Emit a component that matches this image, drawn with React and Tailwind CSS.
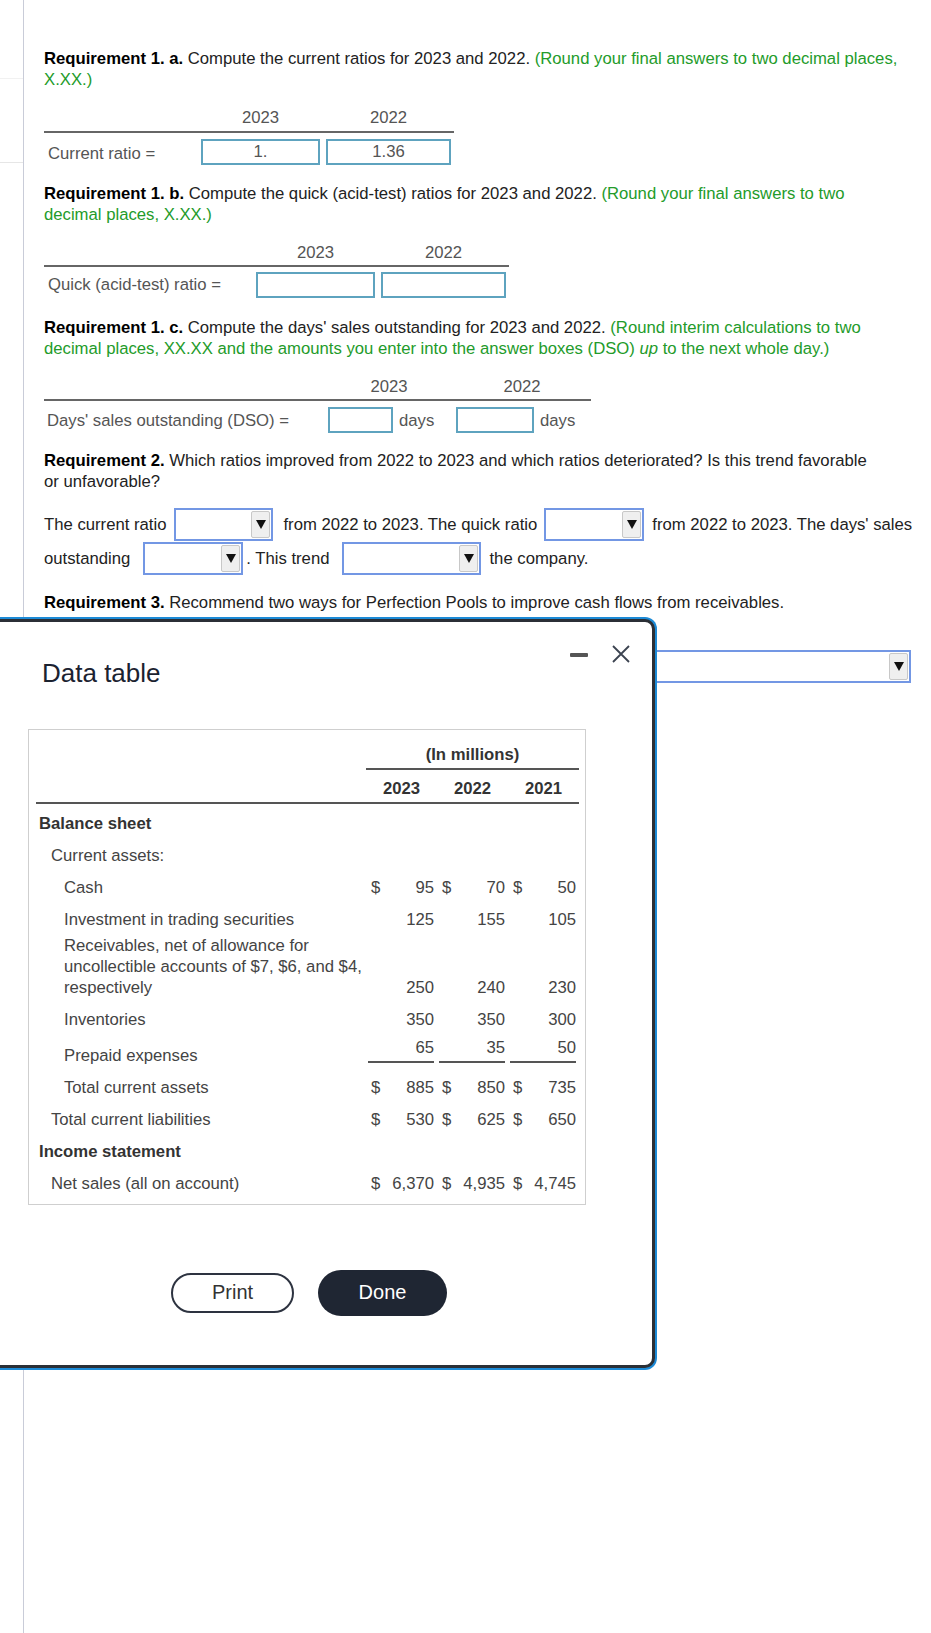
import React from 'react';

const GREEN = 'text-[#239b2a]';

function Box({ className = '', children }) {
    return (
        <div className={`h-[26px] border-2 border-[#5ea3bf] bg-white text-center text-[#555] leading-[22px] ${className}`}>
            {children}
        </div>
    );
}

function Select({ className = '' }) {
    return (
        <div className={`flex h-[33px] shrink-0 justify-end border-2 border-[#7397e4] bg-white p-[1px] ${className}`}>
            <div className="flex w-[19px] items-center justify-center rounded-[2px] border border-[#c8c8c8] bg-[#efefef]">
                <svg width="10" height="9" viewBox="0 0 10 9"><path d="M0 0h10L5 9z" fill="#111" /></svg>
            </div>
        </div>
    );
}

function Cell({ d, v, line }) {
    return (
        <div className="w-[71px] pl-[2px] pr-[3px]">
            <div className={`flex justify-between ${line ? 'border-b-2 border-[#555] pt-[1px] pb-[3px]' : ''}`}>
                <span className="pl-[3px]">{d}</span>
                <span>{v}</span>
            </div>
        </div>
    );
}

const INDENT = ['pl-[3px]', 'pl-[15px]', 'pl-[28px]'];

const ROWS = [
    { label: 'Balance sheet', bold: true, ind: 0 },
    { label: 'Current assets:', ind: 1 },
    { label: 'Cash', ind: 2, vals: [['$', '95'], ['$', '70'], ['$', '50']] },
    { label: 'Investment in trading securities', ind: 2, vals: [['', '125'], ['', '155'], ['', '105']] },
    {
        label: <>Receivables, net of allowance for<br />uncollectible accounts of $7, $6, and $4,<br />respectively</>,
        ind: 2, multi: true, vals: [['', '250'], ['', '240'], ['', '230']]
    },
    { label: 'Inventories', ind: 2, vals: [['', '350'], ['', '350'], ['', '300']] },
    { label: 'Prepaid expenses', ind: 2, line: true, vals: [['', '65'], ['', '35'], ['', '50']] },
    { label: 'Total current assets', ind: 2, vals: [['$', '885'], ['$', '850'], ['$', '735']] },
    { label: 'Total current liabilities', ind: 1, vals: [['$', '530'], ['$', '625'], ['$', '650']] },
    { label: 'Income statement', bold: true, ind: 0 },
    { label: 'Net sales (all on account)', ind: 1, vals: [['$', '6,370'], ['$', '4,935'], ['$', '4,745']] },
];

function DataRow({ r }) {
    if (r.line) {
        return (
            <div className="flex h-[36px]">
                <div className={`w-[330px] self-end pb-[5.5px] ${INDENT[r.ind]}`}>{r.label}</div>
                <div className="flex self-start">
                    {r.vals.map((c, i) => <Cell key={i} d={c[0]} v={c[1]} line />)}
                </div>
            </div>
        );
    }
    return (
        <div className={`flex ${r.multi ? 'pb-[5.5px]' : 'py-[5.5px]'}`}>
            <div className={`w-[330px] ${INDENT[r.ind]} ${r.bold ? 'font-bold text-[#333]' : ''}`}>{r.label}</div>
            {r.vals && (
                <div className="flex items-end">
                    {r.vals.map((c, i) => <Cell key={i} d={c[0]} v={c[1]} />)}
                </div>
            )}
        </div>
    );
}

function DataModal() {
    return (
        <div className="absolute left-[-20px] top-[619px] h-[749px] w-[675px] rounded-r-[10px] border-[3px] border-[#2b2f36] bg-white pl-[45px] pr-[22px] pt-[23px] ring-2 ring-[#1c8ad6]">
            <div className="flex items-start justify-between">
                <div className="ml-[14px] mt-[13px] text-[26px] leading-[30px] text-[#1b2230]">Data table</div>
                <div className="flex items-start">
                    <div className="mt-[8px] h-[4px] w-[18px] rounded-[1px] bg-[#555]" />
                    <svg className="ml-[24px]" width="18" height="18" viewBox="0 0 18 18">
                        <path d="M1 1L17 17M17 1L1 17" stroke="#3b4350" strokeWidth="1.8" />
                    </svg>
                </div>
            </div>

            {/* table */}
            <div className="mt-[41px] w-[558px] border border-[#cfcfcf] pb-[4px] pl-[7px] text-[#444]">
                <div className="flex pt-[14px]">
                    <div className="w-[330px]" />
                    <div className="w-[213px] border-b-2 border-[#555] pb-[3px] text-center font-bold text-[#333]">(In millions)</div>
                </div>
                <div className="flex w-[543px] border-b-2 border-[#555] pb-[3px] pt-[8px] font-bold text-[#333]">
                    <div className="w-[330px]" />
                    {['2023', '2022', '2021'].map(y => <div key={y} className="w-[71px] text-center">{y}</div>)}
                </div>
                <div className="pt-[3px]">
                    {ROWS.map((r, i) => <DataRow key={i} r={r} />)}
                </div>
            </div>

            <div className="mt-[65px] ml-[143px] flex items-center gap-[24px]">
                <button className="h-[40px] w-[123px] rounded-full border-2 border-[#2d3340] bg-white text-[20px] text-[#333]">Print</button>
                <button className="h-[46px] w-[129px] rounded-full bg-[#1f2633] text-[20px] text-white">Done</button>
            </div>
        </div>
    );
}

export default function App() {
    return (
        <div className="relative flex min-h-[1633px] bg-white font-['Liberation_Sans',Arial,sans-serif] text-[16.7px] leading-[21px] text-[#222]">
            <div className="w-[24px] shrink-0 border-r border-[#c9ccd8]">
                <div className="h-[79px] border-b border-[#f1f1f1]" />
                <div className="h-[84px] border-b border-[#e6e6e6]" />
            </div>

            <main className="flex-1 whitespace-nowrap pl-[20px] pt-[48px]">
                <p>
                    <b className="text-black">Requirement 1. a.</b> Compute the current ratios for 2023 and 2022.{' '}
                    <span className={GREEN}>(Round your final answers to two decimal places,<br />X.XX.)</span>
                </p>

                <div className="mt-[17px] w-[410px]">
                    <div className="flex border-b-2 border-[#666] pb-[3px] text-[#555]">
                        <div className="w-[154px]" />
                        <div className="w-[125px] text-center">2023</div>
                        <div className="w-[131px] text-center">2022</div>
                    </div>
                    <div className="flex items-center pt-[5.5px]">
                        <div className="w-[154px] pl-[4px] pt-[3px] text-[#555]">Current ratio =</div>
                        <div className="w-[125px] px-[3px]"><Box>1.</Box></div>
                        <div className="w-[131px] px-[3px]"><Box>1.36</Box></div>
                    </div>
                </div>

                <p className="mt-[18px]">
                    <b className="text-black">Requirement 1. b.</b> Compute the quick (acid-test) ratios for 2023 and 2022.{' '}
                    <span className={GREEN}>(Round your final answers to two<br />decimal places, X.XX.)</span>
                </p>

                <div className="mt-[17.5px] w-[465px]">
                    <div className="flex border-b-2 border-[#666] pb-[2px] text-[#555]">
                        <div className="w-[209px]" />
                        <div className="w-[125px] text-center">2023</div>
                        <div className="w-[131px] text-center">2022</div>
                    </div>
                    <div className="flex items-center pt-[4.5px]">
                        <div className="w-[209px] pl-[4px] text-[#555]">Quick (acid-test) ratio =</div>
                        <div className="w-[125px] px-[3px]"><Box /></div>
                        <div className="w-[131px] px-[3px]"><Box /></div>
                    </div>
                </div>

                <p className="mt-[19px]">
                    <b className="text-black">Requirement 1. c.</b> Compute the days' sales outstanding for 2023 and 2022.{' '}
                    <span className={GREEN}>(Round interim calculations to two<br />decimal places, XX.XX and the amounts you enter into the answer boxes (DSO) <i>up</i> to the next whole day.)</span>
                </p>

                <div className="mt-[17px] w-[547px]">
                    <div className="flex border-b-2 border-[#666] pb-[2px] text-[#555]">
                        <div className="w-[281px]" />
                        <div className="w-[128px] text-center">2023</div>
                        <div className="w-[138px] text-center">2022</div>
                    </div>
                    <div className="flex items-center pt-[6px] text-[#555]">
                        <div className="w-[281px] pl-[3px] pt-[2px]">Days' sales outstanding (DSO) =</div>
                        <div className="flex w-[128px] items-center pl-[3px]">
                            <Box className="w-[65px]" />
                            <span className="ml-[6px] pt-[2px]">days</span>
                        </div>
                        <div className="flex w-[138px] items-center pl-[3px]">
                            <Box className="w-[78px]" />
                            <span className="ml-[6px] pt-[2px]">days</span>
                        </div>
                    </div>
                </div>

                <p className="mt-[17px]">
                    <b className="text-black">Requirement 2.</b> Which ratios improved from 2022 to 2023 and which ratios deteriorated? Is this trend favorable<br />or unfavorable?
                </p>

                <div className="mt-[16.5px] flex h-[33px] items-center">
                    <span>The current ratio</span>
                    <Select className="ml-[8px] w-[99px]" />
                    <span className="ml-[10px]">from 2022 to 2023. The quick ratio</span>
                    <Select className="ml-[7px] w-[100px]" />
                    <span className="ml-[8px]">from 2022 to 2023. The days' sales</span>
                </div>
                <div className="mt-[1px] flex h-[33px] items-center">
                    <span>outstanding</span>
                    <Select className="ml-[13px] w-[100px]" />
                    <span className="ml-[3px]">. This trend</span>
                    <Select className="ml-[13px] w-[139px]" />
                    <span className="ml-[8px]">the company.</span>
                </div>

                <p className="mt-[17px]">
                    <b className="text-black">Requirement 3.</b> Recommend two ways for Perfection Pools to improve cash flows from receivables.
                </p>

                <Select className="mt-[37px] w-[867px]" />
            </main>

            <DataModal />
        </div>
    );
}
